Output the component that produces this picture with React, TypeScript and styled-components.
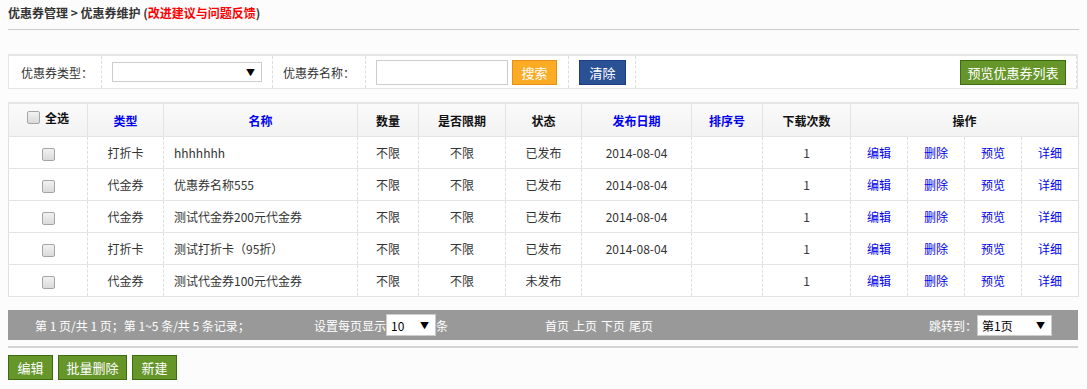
import styled, { createGlobalStyle } from 'styled-components';

const GlobalStyle = createGlobalStyle`
  html, body {
    margin: 0;
    padding: 0;
    background: #fcfcfc;
    font-family: "Noto Sans CJK SC", "Liberation Sans", sans-serif;
    font-size: 12px;
    color: #333;
  }
`;

const Page = styled.div`
  padding: 0 8px;
  width: 1071px;
`;

const Breadcrumb = styled.div`
  height: 30px;
  line-height: 26px;
  box-sizing: border-box;
  font-weight: bold;
  color: #333;
  border-bottom: 1px solid #ccc;
  margin-bottom: 24px;

  span {
    color: #f00;
  }
`;

const FilterBar = styled.div`
  display: flex;
  align-items: stretch;
  height: 32px;
  border: 1px solid #e5e5e5;
  border-top: 2px solid #e5e5e5;
  background: #fff;
  width: 1068px;
`;

const FilterCell = styled.div<{ $w?: number; $pl?: number; $right?: boolean }>`
  display: flex;
  align-items: center;
  gap: 4px;
  ${({ $w }) => ($w ? `width: ${$w}px;` : 'flex: 1;')}
  padding-left: ${({ $pl }) => $pl ?? 0}px;
  box-sizing: border-box;
  border-right: 1px dashed #ddd;
  justify-content: ${({ $right }) => ($right ? 'flex-end' : 'flex-start')};
  padding-right: ${({ $right }) => ($right ? 10 : 0)}px;
`;

const Label = styled.span`
  color: #333;
`;

const SelectWrap = styled.span<{ $w: number; $h: number }>`
  position: relative;
  display: inline-block;
  width: ${({ $w }) => $w}px;
  height: ${({ $h }) => $h}px;
`;

const Select = styled.select`
  appearance: none;
  width: 100%;
  height: 100%;
  box-sizing: border-box;
  border: 1px solid #ccc;
  background: #fff;
  font: inherit;
  color: #000;
  padding: 0 4px;
  outline: none;
`;

const Arrow = styled.span`
  position: absolute;
  right: 7px;
  top: 50%;
  transform: translateY(-50%);
  font-size: 9px;
  color: #000;
  pointer-events: none;
`;

const TextInput = styled.input`
  width: 132px;
  height: 25px;
  box-sizing: border-box;
  border: 1px solid #ccc;
  background: #fff;
  outline: none;
`;

const Button = styled.button<{ $tone: 'orange' | 'navy' | 'green'; $w: number }>`
  width: ${({ $w }) => $w}px;
  height: 25px;
  box-sizing: border-box;
  padding: 0;
  font-family: inherit;
  font-size: 13px;
  color: #fff;
  cursor: pointer;
  background: ${({ $tone }) =>
    $tone === 'orange' ? '#fbab24' : $tone === 'navy' ? '#2b5195' : '#66962a'};
  border: 1px solid
    ${({ $tone }) =>
      $tone === 'orange' ? '#e88d16' : $tone === 'navy' ? '#1b3d80' : '#3d6d10'};
`;

const Table = styled.table`
  margin-top: 13px;
  width: 1070px;
  border-collapse: collapse;
  table-layout: fixed;
  background: #fff;
  border-top: 2px solid #e5e5e5;
  border-left: 1px solid #e0e0e0;
  border-right: 1px solid #e0e0e0;
  border-bottom: 1px solid #e0e0e0;
`;

const Th = styled.th<{ $link?: boolean }>`
  height: 32px;
  padding: 0;
  font-weight: bold;
  color: ${({ $link }) => ($link ? '#0000ee' : '#111')};
  background: linear-gradient(#fafafa, #f2f2f2);
  border-left: 1px solid #e3e3e3;
  border-bottom: 1px solid #e3e3e3;
  text-align: center;
`;

const Td = styled.td<{ $left?: boolean }>`
  height: 31px;
  padding: 0 ${({ $left }) => ($left ? '10px' : '0')};
  text-align: ${({ $left }) => ($left ? 'left' : 'center')};
  color: #333;
  border-left: 1px dashed #ddd;
  border-bottom: 1px solid #e3e3e3;
  white-space: nowrap;
`;

const OpLink = styled.a`
  color: #0000ee;
  text-decoration: none;
`;

const Check = styled.input.attrs({ type: 'checkbox' })`
  appearance: none;
  width: 13px;
  height: 13px;
  margin: 0;
  vertical-align: middle;
  border: 1px solid #a5a5a5;
  border-radius: 2px;
  background: linear-gradient(#f2f2f2, #dadada);
`;

const SelectAll = styled.span`
  display: inline-flex;
  align-items: center;
  gap: 5px;
  position: relative;
  top: -2px;
`;

const Pager = styled.div`
  margin-top: 13px;
  height: 30px;
  display: flex;
  align-items: center;
  background: #999;
  color: #fff;
  width: 1070px;
`;

const PagerInfo = styled.div`
  width: 306px;
  padding-left: 27px;
  box-sizing: border-box;
`;

const PagerSize = styled.div`
  width: 231px;
  display: flex;
  align-items: center;
`;

const PagerNav = styled.div`
  flex: 1;
  display: flex;
  gap: 4px;
`;

const PagerJump = styled.div`
  display: flex;
  align-items: center;
  padding-right: 26px;
`;

const Divider = styled.div`
  margin-top: 6px;
  height: 2px;
  background: #d4d4d4;
  width: 1070px;
`;

const Actions = styled.div`
  margin-top: 7px;
  display: flex;
  gap: 5px;
`;

const rows = [
  { type: '打折卡', name: 'hhhhhhh', status: '已发布', date: '2014-08-04' },
  { type: '代金券', name: '优惠券名称555', status: '已发布', date: '2014-08-04' },
  { type: '代金券', name: '测试代金券200元代金券', status: '已发布', date: '2014-08-04' },
  { type: '打折卡', name: '测试打折卡（95折）', status: '已发布', date: '2014-08-04' },
  { type: '代金券', name: '测试代金券100元代金券', status: '未发布', date: '' },
];

const widths = [79, 76, 194, 61, 87, 76, 110, 71, 88, 57, 57, 57, 57];

function App() {
  return (
    <Page>
      <GlobalStyle />
      <Breadcrumb>
        优惠券管理 &gt; 优惠券维护 (<span>改进建议与问题反馈</span>)
      </Breadcrumb>

      <FilterBar>
        <FilterCell $w={93} $pl={12}>
          <Label>优惠券类型：</Label>
        </FilterCell>
        <FilterCell $w={171} $pl={10}>
          <SelectWrap $w={150} $h={20}>
            <Select />
            <Arrow>▼</Arrow>
          </SelectWrap>
        </FilterCell>
        <FilterCell $w={93} $pl={10}>
          <Label>优惠券名称：</Label>
        </FilterCell>
        <FilterCell $w={203} $pl={10}>
          <TextInput />
          <Button $tone="orange" $w={45}>搜索</Button>
        </FilterCell>
        <FilterCell $w={67} $pl={10}>
          <Button $tone="navy" $w={47}>清除</Button>
        </FilterCell>
        <FilterCell $right>
          <Button $tone="green" $w={106}>预览优惠券列表</Button>
        </FilterCell>
      </FilterBar>

      <Table>
        <colgroup>
          {widths.map((w, i) => (
            <col key={i} style={{ width: w }} />
          ))}
        </colgroup>
        <thead>
          <tr>
            <Th>
              <SelectAll>
                <Check />
                全选
              </SelectAll>
            </Th>
            <Th $link>类型</Th>
            <Th $link>名称</Th>
            <Th>数量</Th>
            <Th>是否限期</Th>
            <Th>状态</Th>
            <Th $link>发布日期</Th>
            <Th $link>排序号</Th>
            <Th>下载次数</Th>
            <Th colSpan={4}>操作</Th>
          </tr>
        </thead>
        <tbody>
          {rows.map((r, i) => (
            <tr key={i}>
              <Td>
                <Check />
              </Td>
              <Td>{r.type}</Td>
              <Td $left>{r.name}</Td>
              <Td>不限</Td>
              <Td>不限</Td>
              <Td>{r.status}</Td>
              <Td>{r.date}</Td>
              <Td />
              <Td>1</Td>
              <Td><OpLink>编辑</OpLink></Td>
              <Td><OpLink>删除</OpLink></Td>
              <Td><OpLink>预览</OpLink></Td>
              <Td><OpLink>详细</OpLink></Td>
            </tr>
          ))}
        </tbody>
      </Table>

      <Pager>
        <PagerInfo>第 1 页/共 1 页；第 1~5 条/共 5 条记录；</PagerInfo>
        <PagerSize>
          设置每页显示
          <SelectWrap $w={50} $h={22}>
            <Select defaultValue="10">
              <option value="10">10</option>
            </Select>
            <Arrow>▼</Arrow>
          </SelectWrap>
          条
        </PagerSize>
        <PagerNav>
          <span>首页</span>
          <span>上页</span>
          <span>下页</span>
          <span>尾页</span>
        </PagerNav>
        <PagerJump>
          跳转到：
          <SelectWrap $w={75} $h={21}>
            <Select defaultValue="1">
              <option value="1">第1页</option>
            </Select>
            <Arrow>▼</Arrow>
          </SelectWrap>
        </PagerJump>
      </Pager>

      <Divider />

      <Actions>
        <Button $tone="green" $w={45}>编辑</Button>
        <Button $tone="green" $w={69}>批量删除</Button>
        <Button $tone="green" $w={45}>新建</Button>
      </Actions>
    </Page>
  );
}

export default App;
